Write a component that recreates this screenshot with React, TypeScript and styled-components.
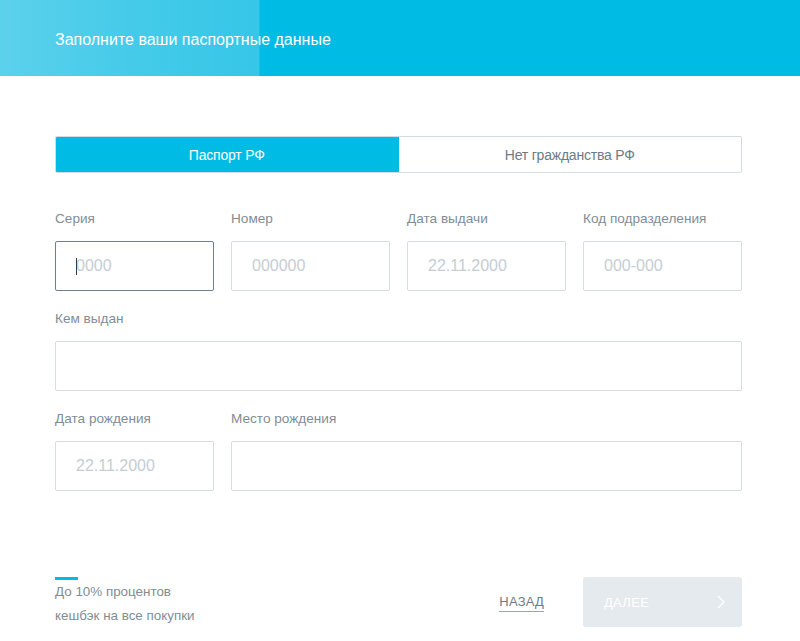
import React from "react";
import styled, { createGlobalStyle } from "styled-components";

const GlobalStyle = createGlobalStyle`
  html, body {
    margin: 0;
    padding: 0;
    background: #ffffff;
    font-family: "Liberation Sans", Arial, sans-serif;
  }
  * { box-sizing: border-box; }
`;

const Page = styled.div`
  width: 800px;
  height: 641px;
  display: flex;
  flex-direction: column;
  overflow: hidden;
`;

const Header = styled.header`
  height: 76px;
  display: flex;
  align-items: center;
  padding-left: 55px;
  padding-top: 3px;
  background: linear-gradient(
    90deg,
    #5cd1ec 0px,
    #45cbe9 130px,
    #36c6e7 259px,
    #00bce4 260px,
    #00bce4 100%
  );
`;

const Title = styled.h1`
  margin: 0;
  font-size: 16px;
  font-weight: 400;
  color: #ffffff;
`;

const Content = styled.main`
  padding: 60px 58px 0 55px;
  display: flex;
  flex-direction: column;
`;

const Tabs = styled.div`
  display: grid;
  grid-template-columns: 1fr 1fr;
  height: 37px;
  border: 1px solid #d4dbe0;
  border-radius: 2px;
  overflow: hidden;
`;

const Tab = styled.button<{ $active?: boolean }>`
  border: none;
  margin: ${(p) => (p.$active ? "-1px 0 -1px -1px" : "0")};
  background: ${(p) => (p.$active ? "#00bbe3" : "#ffffff")};
  color: ${(p) => (p.$active ? "#ffffff" : "#6c7b86")};
  font-family: "Liberation Sans", Arial, sans-serif;
  font-size: 14px;
  letter-spacing: -0.2px;
  cursor: pointer;
`;

const Form = styled.div`
  margin-top: 37px;
  display: flex;
  flex-direction: column;
  gap: 19px;
`;

const Row = styled.div<{ $cols: string }>`
  display: grid;
  grid-template-columns: ${(p) => p.$cols};
  column-gap: 17px;
`;

const Field = styled.label`
  display: flex;
  flex-direction: column;
  gap: 13px;
`;

const Label = styled.span`
  font-size: 13.6px;
  line-height: 18px;
  color: #7f8d97;
`;

const InputWrap = styled.div<{ $focused?: boolean }>`
  position: relative;
  height: 50px;
  border: 1px solid ${(p) => (p.$focused ? "#6d8190" : "#d6dce1")};
  border-radius: 2px;
  background: #ffffff;

  ${(p) =>
    p.$focused &&
    `
    &::after {
      content: "";
      position: absolute;
      left: 20px;
      top: 16px;
      width: 1px;
      height: 17px;
      background: #2c3e4c;
    }
  `}
`;

const Input = styled.input`
  width: 100%;
  height: 100%;
  border: none;
  outline: none;
  background: transparent;
  padding: 0 20px;
  font-family: "Liberation Sans", Arial, sans-serif;
  font-size: 16px;
  color: #2c3e4c;

  &::placeholder {
    color: #c6cdd3;
  }
`;

const Footer = styled.footer`
  margin-top: 86px;
  display: flex;
  align-items: flex-start;
`;

const Promo = styled.div`
  flex: 1;
  display: flex;
  flex-direction: column;
`;

const Accent = styled.div`
  width: 23px;
  height: 3px;
  background: #00bbe3;
`;

const PromoText = styled.p`
  margin: 0;
  font-size: 13.4px;
  line-height: 24px;
  color: #7f8d97;
`;

const BackLink = styled.a`
  margin-top: 17px;
  margin-right: 39px;
  font-size: 13px;
  line-height: 16px;
  color: #6c7b86;
  text-decoration: none;
  border-bottom: 1px solid #9aa7b0;
  padding-bottom: 1px;
  letter-spacing: 0.2px;
`;

const NextButton = styled.button`
  width: 159px;
  height: 50px;
  border: none;
  border-radius: 3px;
  background: #e5eaee;
  color: #ffffff;
  display: flex;
  align-items: center;
  justify-content: space-between;
  padding: 0 17px 0 21px;
  font-family: "Liberation Sans", Arial, sans-serif;
  font-size: 13px;
  letter-spacing: 0.3px;
`;

const fields1 = [
  { label: "Серия", placeholder: "0000", focused: true },
  { label: "Номер", placeholder: "000000" },
  { label: "Дата выдачи", placeholder: "22.11.2000" },
  { label: "Код подразделения", placeholder: "000-000" },
];

export default function App() {
  return (
    <Page>
      <GlobalStyle />
      <Header>
        <Title>Заполните ваши паспортные данные</Title>
      </Header>
      <Content>
        <Tabs>
          <Tab $active>Паспорт РФ</Tab>
          <Tab>Нет гражданства РФ</Tab>
        </Tabs>

        <Form>
          <Row $cols="repeat(4, 1fr)">
            {fields1.map((f) => (
              <Field key={f.label}>
                <Label>{f.label}</Label>
                <InputWrap $focused={f.focused}>
                  <Input placeholder={f.placeholder} />
                </InputWrap>
              </Field>
            ))}
          </Row>

          <Row $cols="1fr">
            <Field>
              <Label>Кем выдан</Label>
              <InputWrap>
                <Input />
              </InputWrap>
            </Field>
          </Row>

          <Row $cols="159px 1fr">
            <Field>
              <Label>Дата рождения</Label>
              <InputWrap>
                <Input placeholder="22.11.2000" />
              </InputWrap>
            </Field>
            <Field>
              <Label>Место рождения</Label>
              <InputWrap>
                <Input />
              </InputWrap>
            </Field>
          </Row>
        </Form>

        <Footer>
          <Promo>
            <Accent />
            <PromoText>
              До 10% процентов
              <br />
              кешбэк на все покупки
            </PromoText>
          </Promo>
          <BackLink href="#">НАЗАД</BackLink>
          <NextButton>
            <span>ДАЛЕЕ</span>
            <svg width="8" height="14" viewBox="0 0 8 14" fill="none">
              <path d="M1 1l6 6-6 6" stroke="#ffffff" strokeWidth="1.4" />
            </svg>
          </NextButton>
        </Footer>
      </Content>
    </Page>
  );
}
